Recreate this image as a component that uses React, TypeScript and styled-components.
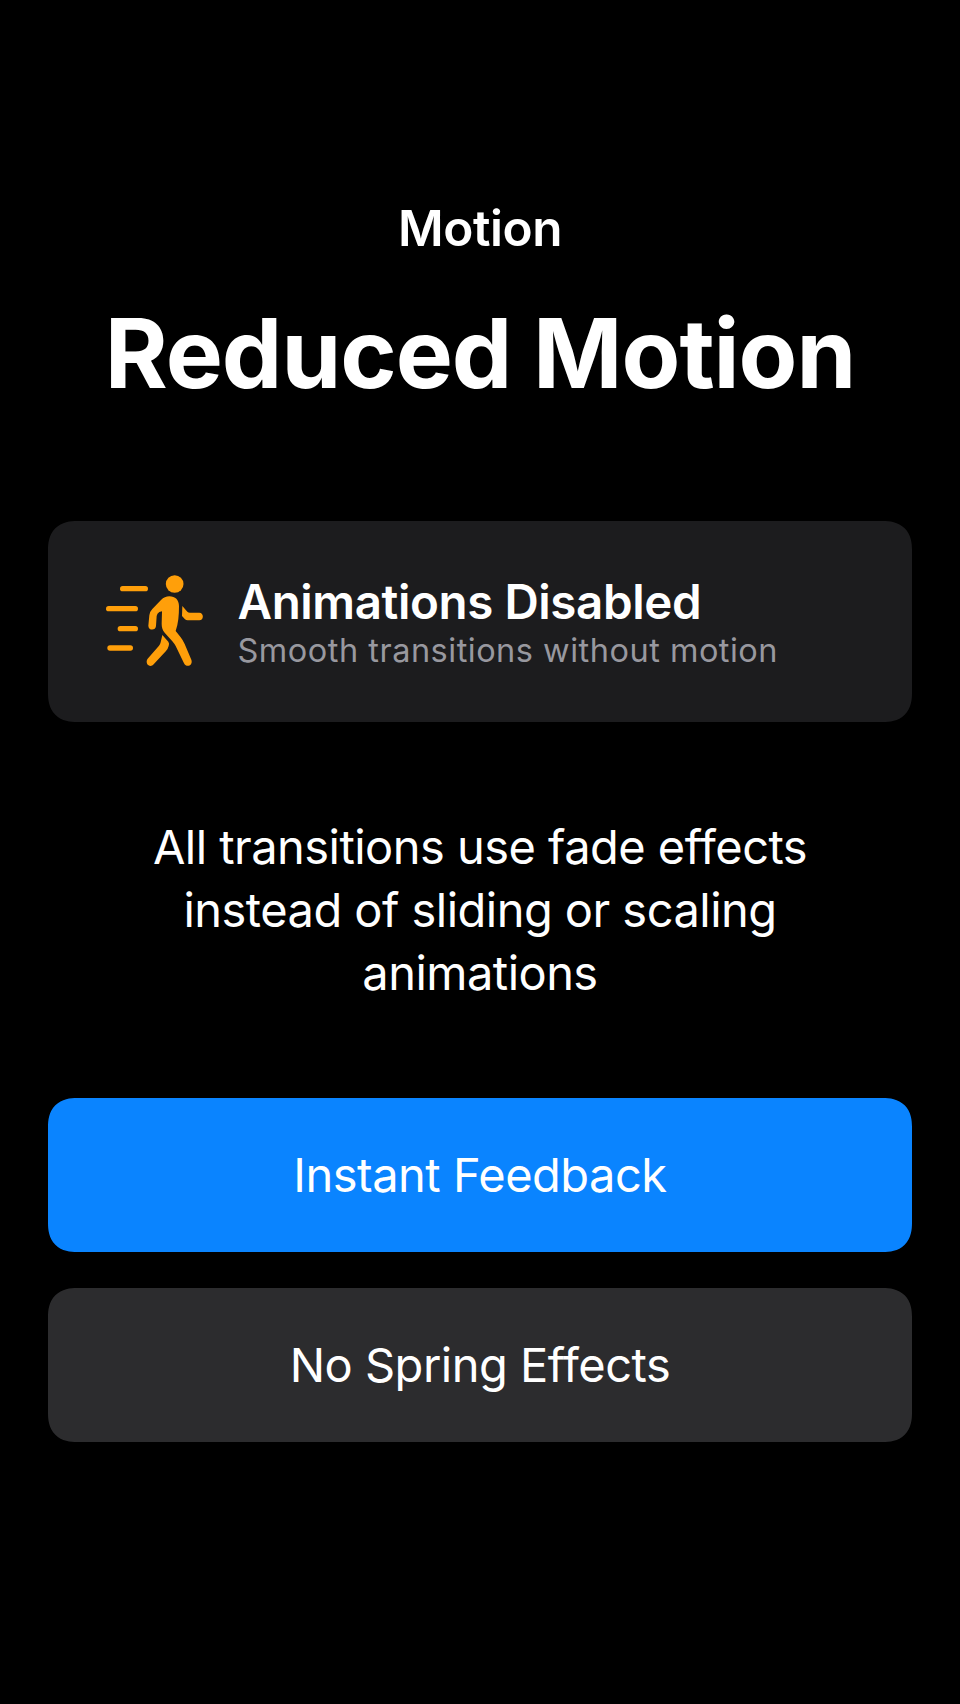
import React from "react";
import styled, { createGlobalStyle } from "styled-components";

const GlobalStyle = createGlobalStyle`
  * { box-sizing: border-box; }
  body {
    margin: 0;
    background: #000;
    font-family: Inter, "Liberation Sans", sans-serif;
    font-variant-ligatures: none;
    color: #fff;
  }
  h1, h2, h3, p { margin: 0; }
`;

const Screen = styled.main`
  display: flex;
  flex-direction: column;
  height: 1704px;
  padding: 198px 48px 0;
  background: #000;
`;

const Eyebrow = styled.h2`
  font-size: 49.5px;
  line-height: 60px;
  font-weight: 600;
  letter-spacing: -0.45px;
  text-align: center;
`;

const Title = styled.h1`
  margin-top: 35px;
  font-size: 96px;
  line-height: 120px;
  font-weight: 700;
  letter-spacing: -1px;
  text-align: center;
  white-space: nowrap;
`;

const Card = styled.section`
  display: flex;
  align-items: center;
  height: 201px;
  margin-top: 108px;
  padding: 0 58px;
  gap: 34px;
  border-radius: 29px;
  corner-shape: superellipse(1.25);
  background: #1c1c1e;
`;

const WalkIcon = styled.svg`
  flex: none;
  width: 98px;
  height: 94px;
  fill: #ff9f0a;
`;

const CardCopy = styled.div`
  margin-left: -0.5px;
`;

const CardTitle = styled.h3`
  font-size: 47.5px;
  line-height: 56px;
  font-weight: 600;
  letter-spacing: -0.4px;
`;

const CardText = styled.p`
  padding-top: 1px;
  margin-bottom: -1px;
  font-size: 32.5px;
  line-height: 40px;
  letter-spacing: 0.5px;
  color: #98989f;
`;

const Description = styled.p`
  margin-top: 93px;
  font-size: 47px;
  line-height: 63px;
  letter-spacing: -0.53px;
  text-align: center;
`;

const Button = styled.button<{ $color: string; $gap: number }>`
  height: 154px;
  margin-top: ${(p) => p.$gap}px;
  padding: 0 0 2px;
  border: 0;
  border-radius: 29px;
  corner-shape: superellipse(1.25);
  background: ${(p) => p.$color};
  color: #fff;
  font: 400 47px Inter, "Liberation Sans", sans-serif;
  font-variant-ligatures: none;
  letter-spacing: -0.5px;
`;

export default function App() {
  return (
    <>
      <GlobalStyle />
      <Screen>
        <Eyebrow>Motion</Eyebrow>
        <Title>Reduced Motion</Title>
        <Card>
          <WalkIcon viewBox="48 44 294 282" aria-hidden="true">
            <rect x="90" y="77" width="84" height="16" rx="8" />
            <rect x="48" y="137" width="96" height="16" rx="8" />
            <rect x="83" y="197" width="61" height="16" rx="8" />
            <rect x="52" y="255" width="77" height="16" rx="8" />
            <circle cx="254" cy="71" r="26.500" />
            <path d="M238 108C256 108 267 119 267 137C267 165 265 190 257 212L272 231Q279 240 284 251L304 298C310 315 290 324 282 309L257 257Q253 250 247 243L224 217C217 209 215 200 215 190L216 153L208 155Q201 159 200 167L198 197C197 212 175 211 175 196L178 165Q179 154 187 146L213 119Q224 108 238 108Z" />
            <path d="M217 224L235 244Q239 249 236 257Q234 265 228 272L191 312C180 325 163 309 173 295L207 256Q211 252 212 246Z" />
            <path d="M277 137L292 154Q295 157 300 157H328C342 157 342 180 328 180H293Q288 180 285 177L276 167Z" />
          </WalkIcon>
          <CardCopy>
            <CardTitle>Animations Disabled</CardTitle>
            <CardText>Smooth transitions without motion</CardText>
          </CardCopy>
        </Card>
        <Description>
          All transitions use fade effects<br />instead of sliding or scaling<br />animations
        </Description>
        <Button $color="#0a84ff" $gap={94}>Instant Feedback</Button>
        <Button $color="#2c2c2e" $gap={36}>No Spring Effects</Button>
      </Screen>
    </>
  );
}
